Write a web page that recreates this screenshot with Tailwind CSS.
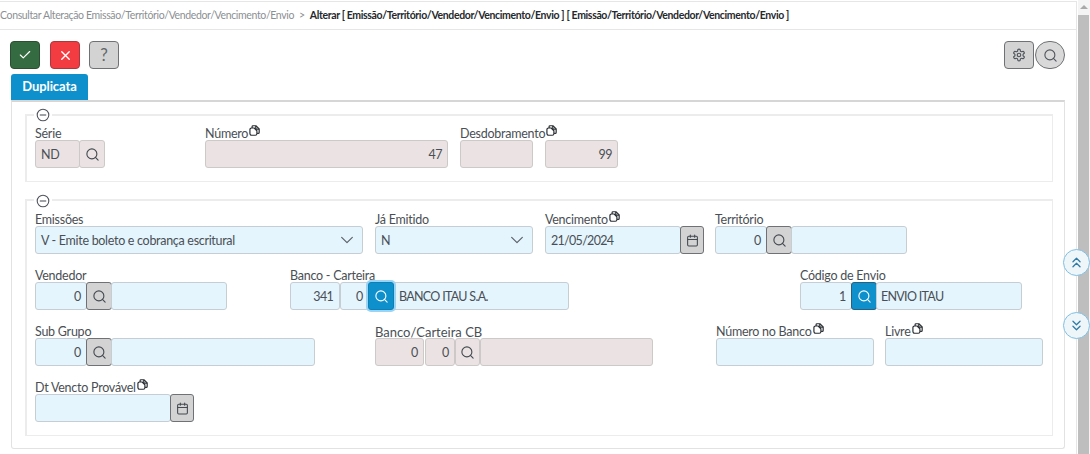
<!DOCTYPE html>
<html lang="pt-BR">
<head>
    <meta charset="UTF-8">
    <title>Alterar Emissão</title>
    <script src="https://cdn.jsdelivr.net/npm/@tailwindcss/browser@4"></script>
</head>
<body class="relative flex h-[454px] w-[1090px] overflow-hidden bg-white text-[12.5px] tracking-[-0.25px] text-[#4a4f55] [font-family:Lato,sans-serif]">
    <svg class="hidden">
        <symbol id="i-search" viewBox="0 0 24 24"><circle cx="11" cy="11" r="8" fill="none" stroke="currentColor" stroke-width="1.8"/><path d="m21 21-4.3-4.3" fill="none" stroke="currentColor" stroke-width="1.8" stroke-linecap="round"/></symbol>
        <symbol id="i-cal" viewBox="0 0 24 24"><g fill="none" stroke="currentColor" stroke-width="2" stroke-linecap="round"><path d="M8 2v4M16 2v4M3 10h18"/><rect x="3" y="4" width="18" height="18" rx="2"/></g></symbol>
        <symbol id="i-copy" viewBox="0 0 12 12"><g fill="none" stroke="currentColor" stroke-width="1.3" stroke-linejoin="round"><path d="M3.4 3.2V1.7c0-.5.4-.9.9-.9h3.2l3.6 3.4v3.9c0 .6-.4 1-1 1H8.8"/><path d="M7.4 1v3.4h3.6"/><path d="M1 5c0-1 .8-1.7 1.7-1.7h2.9l3 3v3.2c0 1-.8 1.7-1.7 1.7H2.8C1.8 11.2 1 10.4 1 9.4z"/></g></symbol>
        <symbol id="i-minus" viewBox="0 0 14 14"><g fill="none" stroke="currentColor" stroke-width="1.1"><circle cx="7" cy="7" r="5.8"/><path d="M3.8 7h6.4"/></g></symbol>
        <symbol id="i-chev" viewBox="0 0 24 24"><path d="m4 8 8 8 8-8" fill="none" stroke="currentColor" stroke-width="1.8" stroke-linecap="round" stroke-linejoin="round"/></symbol>
    </svg>

    <main class="mt-px h-[453px] w-[1077px] shrink-0 border-r border-[#e6e6e6]">
        <!-- breadcrumb -->
        <div class="flex h-[29px] items-center whitespace-nowrap border-y border-[#e6e6e6] pt-[1px] text-[10.5px] tracking-[-0.36px]">
            <span class="text-[#8b8f93]">Consultar Alteração Emissão/Território/Vendedor/Vencimento/Envio</span>
            <span class="mx-[5px] text-[#8b8f93]">&gt;</span>
            <span class="font-bold text-[#26292c]">Alterar [ Emissão/Território/Vendedor/Vencimento/Envio ] [ Emissão/Território/Vendedor/Vencimento/Envio ]</span>
        </div>

        <!-- toolbar -->
        <div class="mt-[11px] flex h-[28px] pl-[10px]">
            <button class="flex h-[28px] w-[30px] items-center justify-center rounded-[4px] border border-[#2c4f33] bg-[#356b40] text-white">
                <svg class="h-[14px] w-[14px]" viewBox="0 0 24 24"><path d="M20 6 9 17l-5-5" fill="none" stroke="currentColor" stroke-width="2" stroke-linecap="round" stroke-linejoin="round"/></svg>
            </button>
            <button class="ml-[10px] flex h-[28px] w-[30px] items-center justify-center rounded-[4px] border border-[#a83a3e] bg-[#f23c41] text-white">
                <svg class="h-[15px] w-[15px]" viewBox="0 0 24 24"><path d="M18 6 6 18M6 6l12 12" fill="none" stroke="currentColor" stroke-width="2.2" stroke-linecap="round"/></svg>
            </button>
            <button class="ml-[9px] flex h-[28px] w-[30px] items-center justify-center rounded-[4px] border border-[#6f7174] bg-[#d3d3d3] text-[17px] text-[#62676c]">?</button>
            <button class="ml-auto flex h-[28px] w-[30px] items-center justify-center rounded-[4px] border border-[#6f7174] bg-[#d3d3d3] text-[#50565c]">
                <svg class="h-[14px] w-[14px]" viewBox="0 0 24 24"><g fill="none" stroke="currentColor" stroke-width="2" stroke-linecap="round" stroke-linejoin="round"><path d="M12.22 2h-.44a2 2 0 0 0-2 2v.18a2 2 0 0 1-1 1.73l-.43.25a2 2 0 0 1-2 0l-.15-.08a2 2 0 0 0-2.73.73l-.22.38a2 2 0 0 0 .73 2.73l.15.1a2 2 0 0 1 1 1.72v.51a2 2 0 0 1-1 1.74l-.15.09a2 2 0 0 0-.73 2.73l.22.38a2 2 0 0 0 2.73.73l.15-.08a2 2 0 0 1 2 0l.43.25a2 2 0 0 1 1 1.73V20a2 2 0 0 0 2 2h.44a2 2 0 0 0 2-2v-.18a2 2 0 0 1 1-1.73l.43-.25a2 2 0 0 1 2 0l.15.08a2 2 0 0 0 2.73-.73l.22-.39a2 2 0 0 0-.73-2.73l-.15-.08a2 2 0 0 1-1-1.74v-.5a2 2 0 0 1 1-1.74l.15-.09a2 2 0 0 0 .73-2.73l-.22-.38a2 2 0 0 0-2.73-.73l-.15.08a2 2 0 0 1-2 0l-.43-.25a2 2 0 0 1-1-1.73V4a2 2 0 0 0-2-2z"/><circle cx="12" cy="12" r="3"/></g></svg>
            </button>
            <button class="ml-px mr-[11px] flex h-[28px] w-[30px] items-center justify-center rounded-full border border-[#6f7174] bg-[#d9d9d9] text-[#50565c]">
                <svg class="h-[15px] w-[15px]"><use href="#i-search"/></svg>
            </button>
        </div>

        <!-- tab -->
        <div class="ml-[11px] mt-[5px] flex h-[26px] w-[77px] items-center justify-center rounded-t-[3px] bg-[#0d90cc] text-[13px] font-bold tracking-[-0.1px] text-white">Duplicata</div>

        <!-- panel -->
        <div class="ml-[11px] h-[349px] w-[1054px] rounded-b-[3px] border border-t-2 border-[#e2e2e2] border-t-[#d6d6d6] pl-[13px] pt-[12px]">
            <!-- fieldset 1 -->
            <div class="relative h-[68px] w-[1028px] border-2 border-b border-r border-[#ececec] pl-[8px] pt-[10px]">
                <span class="absolute left-[7px] top-[-8px] bg-white px-[2px] text-[#50565c]"><svg class="block h-[14px] w-[14px]"><use href="#i-minus"/></svg></span>
                <div class="flex">
                    <div class="w-[70px]">
                        <div class="h-[14px] leading-[16px]">Série</div>
                        <div class="flex h-[28px]">
                            <div class="flex w-[45px] items-center rounded-[3px] border border-[#cdc9c9] bg-[#ebe3e3] pl-[5px] pt-[2px]">ND</div>
                            <button class="ml-[-1px] flex w-[26px] items-center justify-center rounded-[3px] border border-[#cdc9c9] bg-[#ebe3e3] text-[#444a50]"><svg class="h-[15px] w-[15px]"><use href="#i-search"/></svg></button>
                        </div>
                    </div>
                    <div class="ml-[100px] w-[243px]">
                        <div class="flex h-[14px] leading-[16px]">Número<svg class="ml-px mt-[-1px] h-[11px] w-[11px] text-[#2a2e32]"><use href="#i-copy"/></svg></div>
                        <div class="flex h-[28px] items-center justify-end rounded-[3px] border border-[#cdc9c9] bg-[#ebe3e3] pr-[5px] pt-[2px] tracking-[-0.5px]">47</div>
                    </div>
                    <div class="ml-[12px] w-[73px]">
                        <div class="flex h-[14px] leading-[16px]">Desdobramento<svg class="ml-px mt-[-1px] h-[11px] w-[11px] shrink-0 text-[#2a2e32]"><use href="#i-copy"/></svg></div>
                        <div class="h-[28px] rounded-[3px] border border-[#cdc9c9] bg-[#ebe3e3]"></div>
                    </div>
                    <div class="ml-[12px] w-[73px] pt-[14px]">
                        <div class="flex h-[28px] items-center justify-end rounded-[3px] border border-[#cdc9c9] bg-[#ebe3e3] pr-[5px] pt-[2px] tracking-[-0.5px]">99</div>
                    </div>
                </div>
            </div>

            <!-- fieldset 2 -->
            <div class="relative mt-[17px] flex h-[237px] w-[1028px] flex-col gap-[14px] border-2 border-b border-r border-[#ececec] pl-[8px] pt-[11px]">
                <span class="absolute left-[7px] top-[-7px] bg-white px-[2px] text-[#50565c]"><svg class="block h-[14px] w-[14px]"><use href="#i-minus"/></svg></span>

                <div class="flex">
                    <div class="w-[328px]">
                        <div class="h-[14px] leading-[16px]">Emissões</div>
                        <div class="flex h-[28px] items-center justify-between rounded-[3px] border border-[#c6ced3] bg-[#e4f5fd] pl-[5px] pr-[7px] tracking-[-0.3px]"><span class="pt-[2px]">V - Emite boleto e cobrança escritural</span><svg class="h-[16px] w-[16px] text-[#5c6268]"><use href="#i-chev"/></svg></div>
                    </div>
                    <div class="ml-[12px] w-[158px]">
                        <div class="h-[14px] leading-[16px]">Já Emitido</div>
                        <div class="flex h-[28px] items-center justify-between rounded-[3px] border border-[#c6ced3] bg-[#e4f5fd] pl-[5px] pr-[7px]"><span class="pt-[2px]">N</span><svg class="h-[16px] w-[16px] text-[#5c6268]"><use href="#i-chev"/></svg></div>
                    </div>
                    <div class="ml-[12px] w-[159px]">
                        <div class="flex h-[14px] leading-[16px]">Vencimento<svg class="ml-px mt-[-1px] h-[11px] w-[11px] text-[#2a2e32]"><use href="#i-copy"/></svg></div>
                        <div class="flex h-[28px]">
                            <div class="flex w-[136px] items-center rounded-[3px] border border-[#c6ced3] bg-[#e4f5fd] pl-[5px] pt-[2px] tracking-[-0.7px]">21/05/2024</div>
                            <button class="ml-[-1px] flex w-[24px] items-center justify-center rounded-[3px] border border-[#6f7174] bg-[#d3d3d3] text-[#444a50]"><svg class="h-[13px] w-[13px]"><use href="#i-cal"/></svg></button>
                        </div>
                    </div>
                    <div class="ml-[11px] w-[192px]">
                        <div class="h-[14px] leading-[16px]">Território</div>
                        <div class="flex h-[28px]">
                            <div class="flex w-[52px] items-center justify-end rounded-[3px] border border-[#c6ced3] bg-[#e4f5fd] pr-[5px] pt-[2px]">0</div>
                            <button class="ml-[-1px] flex w-[26px] items-center justify-center rounded-[3px] border border-[#6f7174] bg-[#d3d3d3] text-[#444a50]"><svg class="h-[15px] w-[15px]"><use href="#i-search"/></svg></button>
                            <div class="ml-[-1px] flex-1 rounded-[3px] border border-[#c6ced3] bg-[#e4f5fd]"></div>
                        </div>
                    </div>
                </div>

                <div class="flex">
                    <div class="w-[192px]">
                        <div class="h-[14px] leading-[16px]">Vendedor</div>
                        <div class="flex h-[28px]">
                            <div class="flex w-[52px] items-center justify-end rounded-[3px] border border-[#c6ced3] bg-[#e4f5fd] pr-[5px] pt-[2px]">0</div>
                            <button class="ml-[-1px] flex w-[26px] items-center justify-center rounded-[3px] border border-[#6f7174] bg-[#d3d3d3] text-[#444a50]"><svg class="h-[15px] w-[15px]"><use href="#i-search"/></svg></button>
                            <div class="ml-[-1px] flex-1 rounded-[3px] border border-[#c6ced3] bg-[#e4f5fd]"></div>
                        </div>
                    </div>
                    <div class="ml-[63px] w-[279px]">
                        <div class="h-[14px] leading-[16px]">Banco - Carteira</div>
                        <div class="flex h-[28px]">
                            <div class="flex w-[50px] items-center justify-end rounded-[3px] border border-[#c6ced3] bg-[#e4f5fd] pr-[6px] pt-[2px] tracking-[-0.7px]">341</div>
                            <div class="flex w-[29px] items-center justify-end rounded-[3px] border border-[#c6ced3] bg-[#e4f5fd] pr-[5px] pt-[2px]">0</div>
                            <button class="relative z-10 ml-[-1px] flex w-[26px] items-center justify-center rounded-[3px] border border-[#0b7fb6] bg-[#0d90cc] text-white shadow-[0_0_0_2px_#9ad3f3]"><svg class="h-[15px] w-[15px]"><use href="#i-search"/></svg></button>
                            <div class="flex flex-1 items-center rounded-r-[3px] border border-[#c6ced3] bg-[#e4f5fd] pl-[4px] pt-[2px] tracking-[-0.7px]">BANCO ITAU S.A.</div>
                        </div>
                    </div>
                    <div class="ml-[231px] w-[222px]">
                        <div class="h-[14px] leading-[16px]">Código de Envio</div>
                        <div class="flex h-[28px]">
                            <div class="flex w-[52px] items-center justify-end rounded-[3px] border border-[#c6ced3] bg-[#e4f5fd] pr-[5px] pt-[2px]">1</div>
                            <button class="ml-[-1px] flex w-[26px] items-center justify-center rounded-[3px] border border-[#2c5f7c] bg-[#0d90cc] text-white"><svg class="h-[15px] w-[15px]"><use href="#i-search"/></svg></button>
                            <div class="ml-[-1px] flex flex-1 items-center rounded-[3px] border border-[#c6ced3] bg-[#e4f5fd] pl-[4px] pt-[2px] tracking-[-0.7px]">ENVIO ITAU</div>
                        </div>
                    </div>
                </div>

                <div class="flex">
                    <div class="w-[280px]">
                        <div class="h-[14px] leading-[16px]">Sub Grupo</div>
                        <div class="flex h-[28px]">
                            <div class="flex w-[52px] items-center justify-end rounded-[3px] border border-[#c6ced3] bg-[#e4f5fd] pr-[5px] pt-[2px]">0</div>
                            <button class="ml-[-1px] flex w-[26px] items-center justify-center rounded-[3px] border border-[#6f7174] bg-[#d3d3d3] text-[#444a50]"><svg class="h-[15px] w-[15px]"><use href="#i-search"/></svg></button>
                            <div class="ml-[-1px] flex-1 rounded-[3px] border border-[#c6ced3] bg-[#e4f5fd]"></div>
                        </div>
                    </div>
                    <div class="ml-[60px] w-[278px]">
                        <div class="h-[14px] text-[13px] leading-[16px] tracking-normal">Banco/Carteira CB</div>
                        <div class="flex h-[28px]">
                            <div class="flex w-[49px] items-center justify-end rounded-[3px] border border-[#cdc9c9] bg-[#ebe3e3] pr-[5px] pt-[2px]">0</div>
                            <div class="ml-px flex w-[30px] items-center justify-end rounded-[3px] border border-[#cdc9c9] bg-[#ebe3e3] pr-[5px] pt-[2px]">0</div>
                            <button class="flex w-[25px] items-center justify-center rounded-[3px] border border-[#cdc9c9] bg-[#ebe3e3] text-[#444a50]"><svg class="h-[15px] w-[15px]"><use href="#i-search"/></svg></button>
                            <div class="flex-1 rounded-[3px] border border-[#cdc9c9] bg-[#ebe3e3]"></div>
                        </div>
                    </div>
                    <div class="ml-[63px] w-[158px]">
                        <div class="flex h-[14px] leading-[16px]">Número no Banco<svg class="ml-px mt-[-1px] h-[11px] w-[11px] text-[#2a2e32]"><use href="#i-copy"/></svg></div>
                        <div class="h-[28px] rounded-[3px] border border-[#c6ced3] bg-[#e4f5fd]"></div>
                    </div>
                    <div class="ml-[11px] w-[158px]">
                        <div class="flex h-[14px] leading-[16px]">Livre<svg class="ml-px mt-[-1px] h-[11px] w-[11px] text-[#2a2e32]"><use href="#i-copy"/></svg></div>
                        <div class="h-[28px] rounded-[3px] border border-[#c6ced3] bg-[#e4f5fd]"></div>
                    </div>
                </div>

                <div class="flex">
                    <div class="w-[159px]">
                        <div class="flex h-[14px] leading-[16px]">Dt Vencto Provável<svg class="ml-px mt-[-1px] h-[11px] w-[11px] text-[#2a2e32]"><use href="#i-copy"/></svg></div>
                        <div class="flex h-[28px]">
                            <div class="w-[136px] rounded-[3px] border border-[#c6ced3] bg-[#e4f5fd]"></div>
                            <button class="ml-[-1px] flex w-[24px] items-center justify-center rounded-[3px] border border-[#6f7174] bg-[#d3d3d3] text-[#444a50]"><svg class="h-[13px] w-[13px]"><use href="#i-cal"/></svg></button>
                        </div>
                    </div>
                </div>
            </div>
        </div>
    </main>

    <!-- scrollbar -->
    <div class="ml-px flex w-[12px] flex-col bg-[#f4f4f4]">
        <div class="flex h-[15px] items-center justify-center pr-px"><span class="mt-[-2px] h-0 w-0 border-x-[4px] border-b-[4px] border-x-transparent border-b-[#a9a9a9]"></span></div>
        <div class="mr-px flex-1 bg-[#bebebe]"></div>
    </div>

    <!-- scroll to top / bottom -->
    <button class="absolute left-[1063px] top-[249px] flex h-[27px] w-[27px] items-center justify-center rounded-full border border-[#7fc0e4] bg-[#eef6fa] text-[#2f7ba6]">
        <svg class="h-[17px] w-[17px]" viewBox="0 0 24 24"><path d="m7 11 5-5 5 5M7 18l5-5 5 5" fill="none" stroke="currentColor" stroke-width="1.8" stroke-linecap="round" stroke-linejoin="round"/></svg>
    </button>
    <button class="absolute left-[1063px] top-[312px] flex h-[27px] w-[27px] items-center justify-center rounded-full border border-[#7fc0e4] bg-[#eef6fa] text-[#2f7ba6]">
        <svg class="h-[17px] w-[17px]" viewBox="0 0 24 24"><path d="m7 6 5 5 5-5M7 13l5 5 5-5" fill="none" stroke="currentColor" stroke-width="1.8" stroke-linecap="round" stroke-linejoin="round"/></svg>
    </button>
</body>
</html>
